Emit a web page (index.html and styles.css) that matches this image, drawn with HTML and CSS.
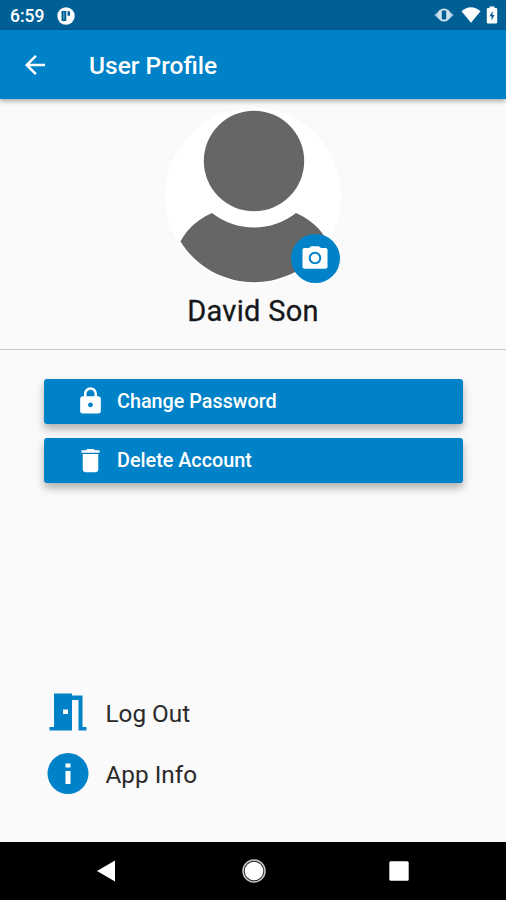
FILE: index.html
```html
<!DOCTYPE html>
<html lang="en">
<head>
<meta charset="utf-8">
<title>User Profile</title>
<link rel="stylesheet" href="styles.css">
</head>
<body>
<div class="screen">
  <div class="status">
    <span class="time">6:59</span>
    <svg class="app-dot" width="18" height="18" viewBox="0 0 18 18"><circle cx="9" cy="9" r="8.700" fill="#fff"/><path d="M4.500 4h4.800v10H4.500zM10.500 4.300H13v4.500h-2.500z" fill="#006096"/><path d="M6 5.300h1.500v7H6z" fill="#4b8db3"/></svg>
    <span class="spacer"></span>
    <svg class="vibrate" width="20" height="14" viewBox="0 0 20 14"><path d="M.5 7L5 3v8zM19.500 7L15 3v8z" fill="#a9cde0"/><ellipse cx="10" cy="7" rx="6.300" ry="6.600" fill="#cfe3ee"/><rect x="7.800" y="2.500" width="4.400" height="9" rx=".8" fill="#006096"/></svg>
    <svg class="wifi" width="20" height="16" viewBox="0 0 20 16"><path d="M.5 4.200Q10-3.500 19.500 4.200L10 15.800z" fill="#fff"/></svg>
    <svg class="battery" width="12" height="18" viewBox="0 0 12 18"><path d="M3.500 2V.5h5V2H10q1.200 0 1.200 1.200V16.300q0 1.200-1.200 1.200H2q-1.200 0-1.200-1.200V3.200Q.8 2 2 2z" fill="#fff"/><path d="M6.600 5L3.500 10.300h2V14.500l3-5.500h-2z" fill="#006096"/></svg>
  </div>
  <header class="appbar">
    <svg class="back" width="30" height="30" viewBox="0 0 24 24"><path d="M20 11H7.830l5.590-5.590L12 4l-8 8 8 8 1.410-1.410L7.830 13H20v-2z" fill="#fff"/></svg>
    <h1>User Profile</h1>
  </header>
  <main>
    <section class="profile">
      <div class="avatar">
        <svg width="176" height="176" viewBox="0 0 176 176"><circle cx="88" cy="88" r="88" fill="#fff"/><circle cx="89" cy="53" r="50.200" fill="#666"/><path d="M15.500 133.500Q25.500 114.500 47 105A68 68 0 0 0 131 105Q152.500 114.500 162.500 133.500A86.600 86.600 0 0 1 15.500 133.500z" fill="#666"/></svg>
        <span class="camera"><svg width="30" height="30" viewBox="0 0 24 24"><path fill="#fff" fill-rule="evenodd" d="M9 2.500L7.170 4H4c-1.100 0-2 .5-2 1.200v14c0 .8.900 1.300 2 1.300h16c1.100 0 2-.5 2-1.300v-14C22 4.500 21.100 4 20 4h-3.170L15 2.500H9zm3 14.500c-2.760 0-5-2.240-5-5s2.240-5 5-5 5 2.240 5 5-2.240 5-5 5z"/><circle cx="12" cy="12" r="3.400" fill="#fff"/></svg></span>
      </div>
      <h2>David Son</h2>
    </section>
    <section class="actions">
      <button class="action"><svg width="31" height="31" viewBox="0 0 24 24"><path fill="#fff" d="M18 8h-1V6c0-2.760-2.240-5-5-5S7 3.240 7 6v2H6c-1.100 0-2 .9-2 2v9.500c0 1.100.9 1.700 2 1.700h12c1.100 0 2-.6 2-1.700V10c0-1.100-.9-2-2-2zm-6 8.500c-1.100 0-1.900-.9-1.900-1.900s.8-1.900 1.900-1.900 1.900.9 1.900 1.900-.8 1.900-1.900 1.900zm3.100-8.500H8.900V6c0-1.710 1.390-3.100 3.100-3.100s3.100 1.390 3.100 3.100v2z"/></svg><span class="change">Change Password</span></button>
      <button class="action"><svg width="31" height="31" viewBox="0 0 24 24"><path fill="#fff" d="M6 19c0 1.100.9 2 2 2h8c1.100 0 2-.9 2-2V7H6v12zM19 4h-3.500l-1-1h-5l-1 1H5v2h14V4z"/></svg><span class="delete">Delete Account</span></button>
    </section>
    <nav class="links">
      <a class="link"><svg width="42" height="42" viewBox="0 0 42 42" fill="#0082c8"><path fill-rule="evenodd" d="M7 1.500h18v37H2.500V35H7zM16 17.500v4.500h5v-4.500z"/><path d="M25 3.500h10.500V35H39.500v3.500h-8V8H25z"/></svg><span class="logout">Log Out</span></a>
      <a class="link"><svg width="42" height="42" viewBox="0 0 42 42"><circle cx="21" cy="20.500" r="20.500" fill="#0082c8"/><path d="M18.500 10.500h5v4h-5zM18.500 18h5v13h-5z" fill="#fff"/></svg><span class="info">App Info</span></a>
    </nav>
  </main>
  <footer class="navbar">
    <svg class="nav-back" width="20" height="24" viewBox="0 0 20 24"><path d="M1 12L19 1.500v21z" fill="#fff"/></svg>
    <svg class="nav-home" width="24" height="24" viewBox="0 0 24 24"><circle cx="12" cy="12" r="11" fill="#222" stroke="#c8c8c8" stroke-width="1.500"/><circle cx="12" cy="12" r="9.300" fill="#fff"/></svg>
    <svg class="nav-recent" width="20" height="20" viewBox="0 0 20 20"><rect x=".3" y=".3" width="19.400" height="19.400" rx="1.500" fill="#fff"/></svg>
  </footer>
</div>
</body>
</html>
```
FILE: styles.css
```css
* { box-sizing: border-box; }
body { margin: 0; font-family: Roboto, "Liberation Sans", sans-serif; background: #fafafa; }
h1, h2 { margin: 0; font-weight: 500; white-space: nowrap; }
svg { display: block; flex: none; }
.screen { width: 506px; height: 900px; display: flex; flex-direction: column; overflow: hidden; }
.status { height: 30px; background: #006096; display: flex; align-items: center; padding: 0 8px 0 10px; color: #fff; flex: none; }
.time { font-size: 17.500px; font-weight: 500; line-height: 30px; padding-top: 2px; width: 47px; }
.app-dot { margin-top: 1px; }
.spacer { flex: 1; }
.vibrate { margin-right: 7px; }
.wifi { margin-right: 5px; }
.appbar { height: 69px; background: #0082c8; display: flex; align-items: center; padding-left: 20px; color: #fff; flex: none; box-shadow: 0 2px 5px rgba(0,0,0,.35); }
.appbar h1 { font-size: 24.500px; margin-left: 39px; padding-top: 2px; line-height: 30px; }
main { flex: 1; display: flex; flex-direction: column; }
.profile { height: 251px; border-bottom: 1px solid #c8c8c8; display: flex; flex-direction: column; align-items: center; padding-top: 9px; }
.avatar { position: relative; width: 176px; height: 176px; }
.camera { position: absolute; right: 1.500px; bottom: 1.500px; width: 49px; height: 49px; border-radius: 50%; background: #0082c8; display: flex; justify-content: center; padding-top: 9px; }
.profile h2 { font-size: 29px; line-height: 34px; margin-top: 10px; color: #15171a; font-weight: 400; letter-spacing: .3px; -webkit-text-stroke: .3px #15171a; }
.actions { padding: 29px 43px 0 44px; display: flex; flex-direction: column; gap: 15px; }
.action { height: 44.500px; border: 0; border-radius: 3px; background: #0082c8; color: #fff; display: flex; align-items: center; padding: 0 0 0 31px; gap: 11px; font: 500 19.800px/40px Roboto, sans-serif; box-shadow: 0 5px 9px rgba(0,0,0,.3); white-space: nowrap; }
.action + .action { margin-top: -.5px; }
.action span { padding-top: 2px; }
.links { margin-top: auto; padding: 0 0 47px 47px; display: flex; flex-direction: column; gap: 19px; }
.link { display: flex; align-items: center; gap: 16.500px; font-size: 24.300px; line-height: 40px; color: #2a2a2a; white-space: nowrap; }
.link span { padding-top: 2px; }
.navbar { height: 58px; background: #000; flex: none; display: flex; align-items: center; padding-left: 96px; }
.nav-home { margin-left: 125.500px; }
.nav-recent { margin-left: 123.500px; }
```
